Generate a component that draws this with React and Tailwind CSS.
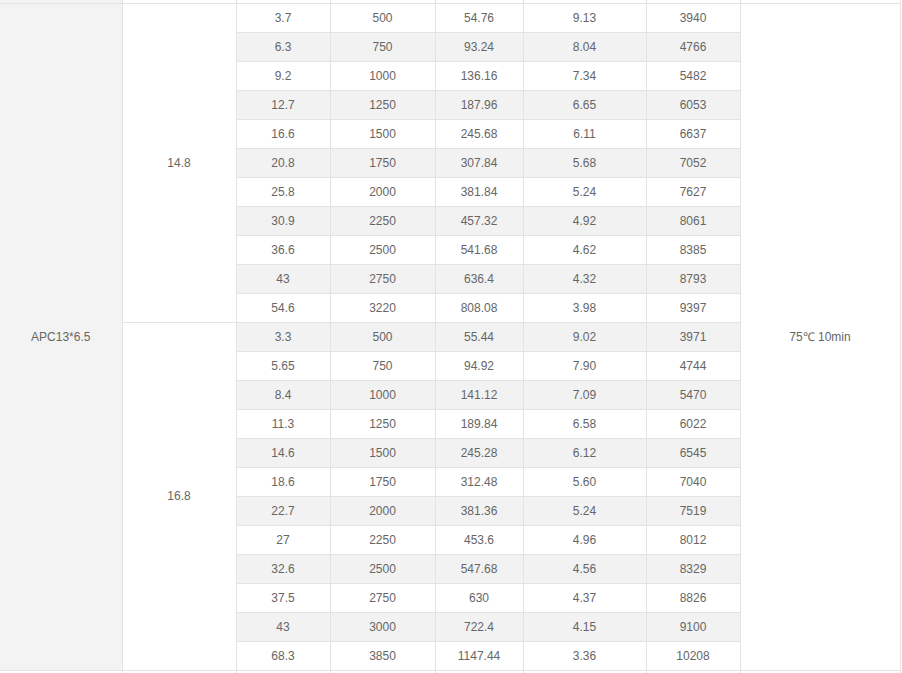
const block1 = [
  ["3.7", "500", "54.76", "9.13", "3940"],
  ["6.3", "750", "93.24", "8.04", "4766"],
  ["9.2", "1000", "136.16", "7.34", "5482"],
  ["12.7", "1250", "187.96", "6.65", "6053"],
  ["16.6", "1500", "245.68", "6.11", "6637"],
  ["20.8", "1750", "307.84", "5.68", "7052"],
  ["25.8", "2000", "381.84", "5.24", "7627"],
  ["30.9", "2250", "457.32", "4.92", "8061"],
  ["36.6", "2500", "541.68", "4.62", "8385"],
  ["43", "2750", "636.4", "4.32", "8793"],
  ["54.6", "3220", "808.08", "3.98", "9397"],
];

const block2 = [
  ["3.3", "500", "55.44", "9.02", "3971"],
  ["5.65", "750", "94.92", "7.90", "4744"],
  ["8.4", "1000", "141.12", "7.09", "5470"],
  ["11.3", "1250", "189.84", "6.58", "6022"],
  ["14.6", "1500", "245.28", "6.12", "6545"],
  ["18.6", "1750", "312.48", "5.60", "7040"],
  ["22.7", "2000", "381.36", "5.24", "7519"],
  ["27", "2250", "453.6", "4.96", "8012"],
  ["32.6", "2500", "547.68", "4.56", "8329"],
  ["37.5", "2750", "630", "4.37", "8826"],
  ["43", "3000", "722.4", "4.15", "9100"],
  ["68.3", "3850", "1147.44", "3.36", "10208"],
];

const td = "border border-[#e3e3e3] text-center align-middle p-0";

function DataCells({ row, i }) {
  const bg = i % 2 === 1 ? "bg-[#f2f2f2]" : "bg-white";
  return row.map((v, j) => (
    <td key={j} className={`${td} ${bg}`}>{v}</td>
  ));
}

export default function App() {
  return (
    <div className="w-[902px] h-[673px] overflow-hidden bg-white font-['Liberation_Sans',Arial,sans-serif] text-[12px] text-[#666]">
      <table className="w-[900px] table-fixed border-collapse">
        <colgroup>
          <col className="w-[122px]" />
          <col className="w-[114px]" />
          <col className="w-[94px]" />
          <col className="w-[105px]" />
          <col className="w-[88px]" />
          <col className="w-[123px]" />
          <col className="w-[94px]" />
          <col className="w-[160px]" />
        </colgroup>
        <tbody>
          <tr className="h-[3px]">
            <td className={`${td} bg-[#f3f3f3] border-t-0 border-l-0`} />
            <td className={`${td} border-t-0`} />
            <td className={`${td} border-t-0`} />
            <td className={`${td} border-t-0`} />
            <td className={`${td} border-t-0`} />
            <td className={`${td} border-t-0`} />
            <td className={`${td} border-t-0`} />
            <td className={`${td} border-t-0`} />
          </tr>
          {block1.map((row, i) => (
            <tr key={"a" + i} className="h-[29px]">
              {i === 0 && (
                <td rowSpan={23} className={`${td} bg-[#f3f3f3] border-l-0`}>APC13*6.5</td>
              )}
              {i === 0 && (
                <td rowSpan={11} className={`${td} bg-white`}>14.8</td>
              )}
              <DataCells row={row} i={i} />
              {i === 0 && (
                <td rowSpan={23} className={`${td} bg-white`}>75℃ 10min</td>
              )}
            </tr>
          ))}
          {block2.map((row, i) => (
            <tr key={"b" + i} className="h-[29px]">
              {i === 0 && (
                <td rowSpan={12} className={`${td} bg-white`}>16.8</td>
              )}
              <DataCells row={row} i={i + block1.length} />
            </tr>
          ))}
          <tr className="h-[29px]">
            <td className={`${td} border-l-0`} />
            <td className={td} />
            <td className={td} />
            <td className={td} />
            <td className={td} />
            <td className={td} />
            <td className={td} />
            <td className={td} />
          </tr>
        </tbody>
      </table>
    </div>
  );
}
